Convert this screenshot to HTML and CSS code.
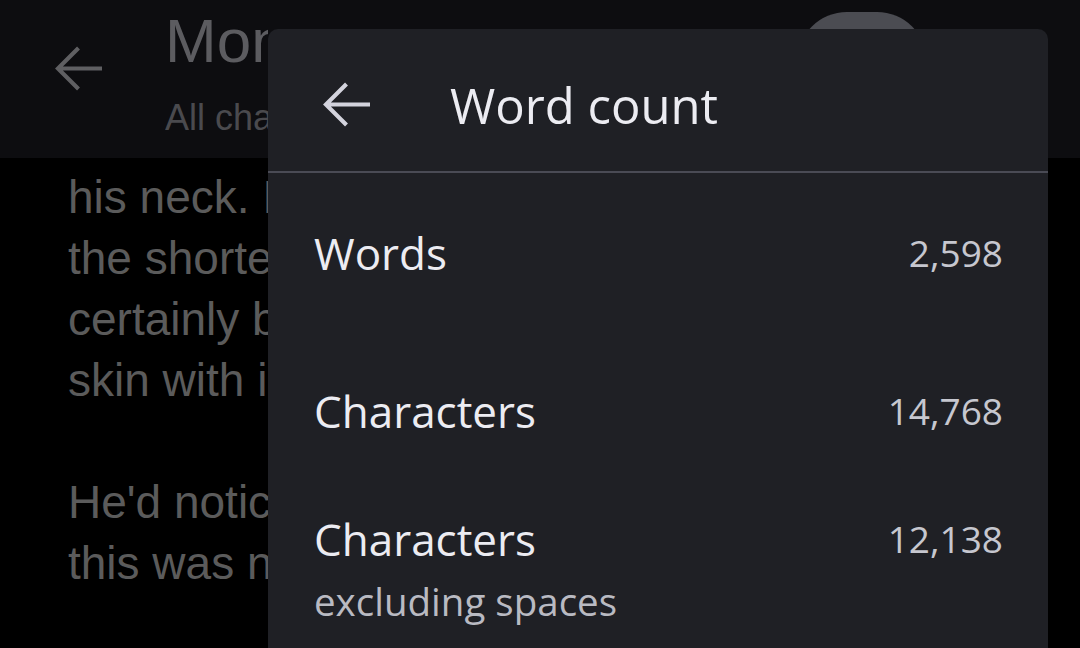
FILE: index.html
```html
<!DOCTYPE html>
<html lang="en">
<head>
    <meta charset="UTF-8">
    <meta name="viewport" content="width=device-width, initial-scale=1.0">
    <title>Word count</title>
    <link rel="stylesheet" href="styles.css">
</head>
<body>
    <div class="screen">
        <header class="app-bar">
            <svg class="back-icon dim" viewBox="0 0 16 16" width="47" height="47">
                <path d="M16 8H1.2M8 1L1 8l7 7" fill="none" stroke="currentColor" stroke-width="1.4"/>
            </svg>
            <div class="title-block">
                <div class="doc-title">Mon</div>
                <div class="doc-sub">All cha</div>
            </div>
            <div class="share-pill"></div>
        </header>
        <main class="doc-body">
            <p>his neck. I</p>
            <p>the shorte</p>
            <p>certainly b</p>
            <p>skin with i</p>
            <p class="gap">He'd notic</p>
            <p>this was n</p>
        </main>

        <!-- Word count dialog over the document -->
        <section class="dialog">
            <div class="dialog-head">
                <svg class="back-icon" viewBox="0 0 16 16" width="47" height="47">
                    <path d="M16 8H1.2M8 1L1 8l7 7" fill="none" stroke="currentColor" stroke-width="1.4"/>
                </svg>
                <h2>Word count</h2>
            </div>
            <div class="stat-list">
                <div class="stat-row first">
                    <span class="stat-label">Words</span>
                    <span class="stat-value">2,598</span>
                </div>
                <div class="stat-row second">
                    <span class="stat-label">Characters</span>
                    <span class="stat-value">14,768</span>
                </div>
                <div class="stat-row third">
                    <div>
                        <span class="stat-label">Characters</span>
                        <span class="stat-note">excluding spaces</span>
                    </div>
                    <span class="stat-value">12,138</span>
                </div>
            </div>
        </section>
    </div>
</body>
</html>
```

FILE: styles.css
```css
body {
    margin: 0;
    padding: 0;
    background-color: #000;
    font-family: "Liberation Sans", Arial, sans-serif;
    overflow: hidden;
}
.screen {
    position: relative;
    width: 1080px;
    height: 648px;
    overflow: hidden;
}
.app-bar {
    height: 158px;
    background-color: #0d0d10;
    display: flex;
    align-items: flex-start;
    box-sizing: border-box;
    padding: 0 0 0 55px;
}
.back-icon {
    display: block;
    flex-shrink: 0;
    color: #d3d3dd;
}
.back-icon.dim {
    color: #5f5f62;
    margin-top: 45px;
}
.title-block {
    margin-left: 63px;
    width: 103px;
    white-space: nowrap;
    overflow: hidden;
}
.doc-title {
    font-size: 62px;
    line-height: 62px;
    margin-top: 10px;
    color: #5c5c60;
}
.doc-sub {
    font-size: 36px;
    line-height: 40px;
    margin-top: 26px;
    color: #4a4a4e;
}
.share-pill {
    width: 130px;
    height: 100px;
    border-radius: 50px;
    background-color: #4b4c52;
    margin: 12px 0 0 auto;
    margin-right: 153px;
    flex-shrink: 0;
}
.doc-body {
    padding: 9px 0 0 68px;
    color: #5b5b5b;
    font-size: 46px;
    line-height: 61px;
    white-space: nowrap;
}
.doc-body p {
    margin: 0;
    width: 200px;
    overflow: hidden;
}
.doc-body .gap {
    margin-top: 61px;
}
.dialog {
    position: absolute;
    left: 268px;
    top: 29px;
    width: 780px;
    height: 700px;
    background-color: #1f2025;
    border-radius: 10px;
    font-family: "Open Sans", sans-serif;
}
.dialog-head {
    height: 144px;
    box-sizing: border-box;
    display: flex;
    align-items: center;
    padding: 9px 0 0 55px;
    border-bottom: 2px solid #4a4b55;
}
.dialog-head h2 {
    margin: 0 0 0 80px;
    font-weight: normal;
    font-size: 49px;
    color: #ececf2;
}
.stat-list {
    padding: 0 45px 0 46px;
}
.stat-row {
    display: flex;
    justify-content: space-between;
    align-items: flex-start;
}
.stat-row.first {
    margin-top: 52px;
}
.stat-row.second {
    margin-top: 102px;
}
.stat-row.third {
    margin-top: 72px;
}
.stat-label {
    display: block;
    font-size: 44px;
    line-height: 56px;
    color: #ececf2;
}
.stat-note {
    display: block;
    font-size: 38.5px;
    line-height: 58px;
    margin-top: 5px;
    color: #b9bac2;
}
.stat-value {
    font-size: 37px;
    line-height: 56px;
    color: #c6c7cf;
}
```
